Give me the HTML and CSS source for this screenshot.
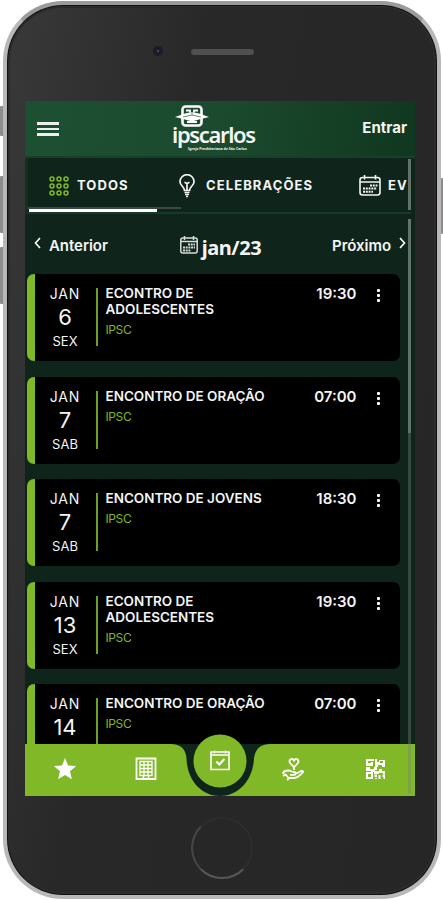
FILE: index.html
```html
<!DOCTYPE html>
<html lang="pt-BR">
<head>
<meta charset="utf-8">
<title>Agenda</title>
<link rel="stylesheet" href="styles.css">
</head>
<body>
<div class="stage">
  <i class="key key-mute"></i><i class="key key-up"></i><i class="key key-down"></i><i class="key key-power"></i>
  <div class="phone">
    <div class="phone-top"><i class="camera"></i><i class="speaker"></i></div>
    <div class="screen">
      <header class="topbar">
        <div class="burger"><i></i><i></i><i></i></div>
        <div class="logo">
          <svg class="logo-mark" width="34" height="22" viewBox="0 0 34 22" fill="none" stroke="#fff">
            <rect x="7.5" y="1.5" width="19" height="19" rx="3" stroke-width="2.6"/>
            <path d="M11 5.5h4v2M23 5.5h-4v2M12 17h10" stroke-width="1.8"/>
            <path d="M0 12 10 8.500 17 7l7 1.500L34 12l-10 2.500-7 2-7-2z" fill="#fff" stroke="none"/>
            <path d="M8 12l9-2 9 2M17 6v4" stroke="#28593b" stroke-width=".7"/>
          </svg>
          <span class="logo-name">ipscarlos</span>
          <span class="logo-sub">Igreja Presbiteriana de São Carlos</span>
        </div>
        <span class="enter">Entrar</span>
      </header>
      <nav class="tabs">
        <div class="tab tab-all">
          <svg width="20" height="20" viewBox="0 0 20 20" fill="none" stroke="#82bc20" stroke-width="1.5">
            <circle cx="3" cy="3" r="2"/><circle cx="10" cy="3" r="2"/><circle cx="17" cy="3" r="2"/>
            <circle cx="3" cy="10" r="2"/><circle cx="10" cy="10" r="2"/><circle cx="17" cy="10" r="2"/>
            <circle cx="3" cy="17" r="2"/><circle cx="10" cy="17" r="2"/><circle cx="17" cy="17" r="2"/>
          </svg>
          <span>TODOS</span>
        </div>
        <div class="tab tab-cel">
          <svg width="16" height="24" viewBox="0 0 16 24" fill="none" stroke="#f4f4f4" stroke-width="1.7">
            <path d="M5.5 16.5C5.5 12.5 1 12 1 7.700a7 7 0 0 1 14 0c0 4.300-4.500 4.800-4.500 8.800z"/>
            <path d="M5.500 18.500h5M6 20.500h4M7 22.500h2M8 16V9.500L5.500 8.300M8 9.500l2.500-1.200"/>
          </svg>
          <span>CELEBRAÇÕES</span>
        </div>
        <div class="tab tab-ev">
          <svg width="22" height="21" viewBox="0 0 22 21" fill="none" stroke="#f4f4f4" stroke-width="1.600">
            <rect x="1" y="2.500" width="20" height="17.500" rx="2.500"/><path d="M1 7h20M5.500 0v4.500M16.500 0v4.500"/>
            <path d="M11 10.500h7.500M4 13.500h14M4 16.700h10" stroke-width="2" stroke-dasharray="2 .8"/>
          </svg>
          <span>EVENTOS</span>
        </div>
        <i class="tab-scroll"></i><i class="tab-ink"></i>
      </nav>
      <main class="content">
        <div class="month">
          <div class="prev"><svg width="7" height="12" viewBox="0 0 7 12" fill="none" stroke="#fff" stroke-width="1.600"><path d="M6 1 1.500 6 6 11"/></svg><span class="t-prev">Anterior</span></div>
          <div class="cur">
            <svg width="18" height="18" viewBox="0 0 18 18" fill="none" stroke="#d8dbd9" stroke-width="1.500">
              <rect x=".8" y="2" width="16.400" height="15" rx="2"/><path d="M1 5.500h16M4.500 0v4M13.500 0v4"/>
              <path d="M8 8.500h7M3 11.500h12M3 14.500h8" stroke-width="1.800" stroke-dasharray="2 .7"/>
            </svg><span class="t-cur">jan/23</span></div>
          <div class="next"><span class="t-next">Próximo</span><svg width="7" height="12" viewBox="0 0 7 12" fill="none" stroke="#fff" stroke-width="1.600"><path d="M1 1 5.500 6 1 11"/></svg></div>
        </div>
        <div class="list">
          <article class="card"><div class="date"><span class="mon">JAN</span><span class="day">6</span><span class="wk">SEX</span></div><i class="rule"></i><div class="info"><h3>ECONTRO DE<br>ADOLESCENTES</h3><p>IPSC</p></div><time>19:30</time><div class="dots"><i></i><i></i><i></i></div></article>
          <article class="card"><div class="date"><span class="mon">JAN</span><span class="day">7</span><span class="wk">SAB</span></div><i class="rule"></i><div class="info"><h3>ENCONTRO DE ORAÇÃO</h3><p>IPSC</p></div><time>07:00</time><div class="dots"><i></i><i></i><i></i></div></article>
          <article class="card"><div class="date"><span class="mon">JAN</span><span class="day">7</span><span class="wk">SAB</span></div><i class="rule"></i><div class="info"><h3>ENCONTRO DE JOVENS</h3><p>IPSC</p></div><time>18:30</time><div class="dots"><i></i><i></i><i></i></div></article>
          <article class="card"><div class="date"><span class="mon">JAN</span><span class="day">13</span><span class="wk">SEX</span></div><i class="rule"></i><div class="info"><h3>ECONTRO DE<br>ADOLESCENTES</h3><p>IPSC</p></div><time>19:30</time><div class="dots"><i></i><i></i><i></i></div></article>
          <article class="card"><div class="date"><span class="mon">JAN</span><span class="day">14</span></div><i class="rule"></i><div class="info"><h3>ENCONTRO DE ORAÇÃO</h3><p>IPSC</p></div><time>07:00</time><div class="dots"><i></i><i></i><i></i></div></article>
        </div>
      </main>
      <footer class="dock">
        <svg class="dock-shape" width="390" height="62" viewBox="0 0 390 62">
          <path d="M149 10h92v52h-92z" fill="#0f241b"/>
          <path d="M0 10H146Q160 10 161.500 24C162 47 177 62 195 62S228 47 229 24Q231 10 245 10H390V62H0z" fill="#80b827"/>
          <circle cx="195" cy="27" r="26.500" fill="#80b827"/>
        </svg>
        <div class="dock-items">
          <svg width="24" height="24" viewBox="0 0 24 24" fill="#fff"><path d="m12 1 3.100 7.500 8.100.6-6.200 5.200 1.900 7.900-6.900-4.200-6.900 4.200 1.900-7.900L.8 9.100l8.100-.6z"/></svg>
          <svg class="building" width="22" height="24" viewBox="0 0 22 24" fill="none" stroke="#fff"><path d="M1.500 1.500h19v20.500h-19z" stroke-width="1.800"/><path d="M5 4.500h12v14H5zM9 4.500v14M13 4.500v14M5 8h12M5 11.500h12M5 15h12" stroke-width="1.300"/><path d="M1 22.300h20M8.500 18.500V22M13.500 18.500V22" stroke-width="1.500"/></svg>
          <svg class="main-ico" width="20" height="21" viewBox="0 0 20 21" fill="none" stroke="#fff"><path d="M1 2h18v17.500H1z" stroke-width="1.600"/><path d="M1 5h18M4.500 .5v3M15.500 .5v3" stroke-width="1.300"/><path d="m6.300 11.500 3 3 5-5.500" stroke-width="2.200"/></svg>
          <svg class="giving" width="22" height="23" viewBox="0 0 22 23" fill="none" stroke="#fff" stroke-width="1.800"><path d="M12 9C9 6.500 7.500 5.500 7.500 3.400 7.500.5 11 .3 12 2.500c1-2.200 4.500-2 4.500.9C16.500 5.500 15 6.500 12 9zM12 9v3"/><path d="M1 16c0-3 3-3.500 5.500-3.500 2.500 0 3 1.500 5 1.500 3 0 3 2.800.5 2.800H8M13.500 16l5.500-3c1.500-.7 2.600.6 1.500 1.700-3 2.800-4 5.300-8 5.300H7.500L5 22M1 18l2.500-1.500L7 20.500"/></svg>
          <svg class="qr" width="19" height="20" viewBox="0 0 19 20" fill="#fff"><path fill-rule="evenodd" d="M0 0h8v2H2v2h3V3h2v4H0zM9 0h2v3h2V1h6v7h-3V6h-4v2H9zM14 2v2h3V2zM0 8h4v2h4V8h3v3H9v1h4v-2h3v2h3v3h-2v-1h-4v1H8v-2H5v-1H0zM0 13h7v7H0zM2 15v3h3v-3zM8.500 15.500h2.500V18H8.500zM12.500 16h2v4h-2zM16.500 15.500H19V20h-1.500v-2h-1zM9 19h2v1H9z"/></svg>
        </div>
      </footer>
      <i class="bar bar-tabs"></i><i class="bar bar-main"></i><i class="bar bar-low"></i>
    </div>
    <div class="home"></div>
  </div>
</div>
</body>
</html>
```
FILE: styles.css
```css
* { box-sizing: border-box; }
body { margin: 0; background: #fff; color: #f4f4f4; font-family: "Noto Sans", sans-serif; }
i { display: block; }
.stage { position: relative; width: 443px; height: 900px; padding: 1px 2px 0 3px; overflow: hidden; }
.key { position: absolute; background: #8e8c8f; border-radius: 1px; }
.key-mute { left: 0; top: 106px; width: 5px; height: 30px; }
.key-up { left: 0; top: 176px; width: 5px; height: 57px; }
.key-down { left: 0; top: 247px; width: 5px; height: 57px; }
.key-power { left: 438px; top: 178px; width: 5px; height: 56px; }
.phone { position: relative; width: 438px; height: 898px; border: 4px solid #b9b7b8; border-top-color: #9b9b9b; border-radius: 60px; background: linear-gradient(100deg, #393939 0, #282828 35%, #262626 100%); box-shadow: inset 0 0 0 1px #111, inset 0 0 0 3px #2c2c2c; padding: 0 18px; }
.phone-top { height: 96px; display: flex; align-items: flex-start; padding: 41px 0 0 128px; gap: 28px; }
.camera { width: 10px; height: 10px; border-radius: 50%; background: #5a5880; border: 4px solid #1d1b2a; }
.speaker { width: 63px; height: 6px; border-radius: 3px; background: #505050; margin-top: 3px; }
.screen { position: relative; width: 390px; height: 695px; display: flex; flex-direction: column; background: #0f241b; overflow: hidden; }
.topbar { height: 57px; flex: none; display: grid; grid-template-columns: 1fr 90px 1fr; align-items: start; padding: 0 8px 0 12px; background: linear-gradient(100deg, #1d5032, #1b4a2f 50%, #10371f); border-bottom: 2px solid #173f29; }
.burger { display: flex; flex-direction: column; gap: 3px; margin-top: 21px; width: 22px; }
.burger i { height: 2.500px; background: #eee; }
.logo { display: flex; flex-direction: column; align-items: flex-start; padding: 4px 0 0 5px; margin-left: -8px; }
.logo-mark { flex: none; margin-left: 1px; }
.logo-name { font-size: 22px; line-height: 20px; letter-spacing: -1.350px; font-weight: 600; margin-top: -3px; margin-left: -2px; white-space: nowrap; }
.logo-sub { font-size: 3.500px; line-height: 4px; font-weight: 700; white-space: nowrap; margin: 3px 0 0 14px; }
.enter { justify-self: end; margin-top: 17px; font-family: Inter, sans-serif; font-size: 15px; line-height: 20px; font-weight: 700; letter-spacing: 0; }
.tabs { position: relative; height: 56px; flex: none; display: flex; align-items: flex-start; padding: 17px 0 0 21px; border-bottom: 2px solid #163a29; border-left: 3px solid #123220; overflow: hidden; margin-right: 4px; }
.tab { display: flex; align-items: center; flex: none; height: 20px; font-family: Inter, sans-serif; font-size: 13px; font-weight: 700; letter-spacing: 1.100px; }
.tab-all { width: 130px; gap: 8px; }
.tab-cel { width: 180px; gap: 11px; }
.tab-ev { gap: 7px; }
.tab svg { flex: none; margin-top: 1px; }
.tab span { white-space: nowrap; }
.tab-scroll { position: absolute; left: 0; top: 49px; width: 153px; height: 2px; background: #3b4843; }
.tab-ink { position: absolute; left: 1px; top: 51px; width: 128px; height: 3px; background: #fff; }
.content { flex: 1; min-height: 0; overflow: hidden; }
.month { height: 60px; display: flex; justify-content: space-between; padding: 20px 9px 0 9px; }
.prev, .next, .cur { display: flex; align-items: flex-start; }
.prev { gap: 8px; width: 120px; }
.next { gap: 8px; width: 120px; justify-content: flex-end; }
.prev svg, .next svg { margin-top: 3px; }
.t-prev, .t-next { font-family: Inter, sans-serif; font-size: 15px; line-height: 23px; font-weight: 600; letter-spacing: -.05px; white-space: nowrap; }
.cur { gap: 4px; margin-left: 1px; }
.cur svg { margin-top: 2px; flex: none; }
.t-cur { font-size: 20px; line-height: 27px; font-weight: 700; letter-spacing: -.4px; }
.list { display: flex; flex-direction: column; gap: 15.600px; padding: 0 15px 0 2px; }
.card { height: 87px; flex: none; display: flex; align-items: flex-start; background: #000; border-radius: 7px; border-left: 8px solid #80b827; padding-top: 11px; }
.date { width: 60px; display: flex; flex-direction: column; align-items: center; font-family: Inter, sans-serif; }
.mon { font-size: 14px; line-height: 17px; letter-spacing: .8px; }
.day { font-size: 22px; line-height: 31px; }
.wk { font-size: 13px; line-height: 17px; }
.rule { width: 1.500px; height: 58px; background: #6f9f24; margin: 3px 0 0 1px; }
.info { width: 200px; margin-left: 8px; font-family: Inter, sans-serif; }
h3 { margin: 0; font-size: 13.500px; line-height: 16px; font-weight: 600; letter-spacing: -.02px; white-space: nowrap; }
p { margin: 5px 0 0; color: #80b827; font-size: 12px; line-height: 16px; letter-spacing: -.4px; }
time { width: 51px; text-align: right; font-family: Inter, sans-serif; font-size: 15px; line-height: 17px; font-weight: 600; }
.dots { margin: 4px 0 0 20px; display: flex; flex-direction: column; gap: 2px; }
.dots i { width: 3px; height: 3px; background: #fff; border-radius: 1px; }
.dock { position: absolute; left: 0; bottom: 0; width: 390px; height: 62px; }
.dock-shape { position: absolute; left: 0; top: 0; }
.dock-items { position: relative; height: 62px; display: grid; grid-template-columns: 80px 82px 66px 80px 84px; justify-items: center; align-items: center; padding-top: 8px; }
.main-ico { margin-bottom: 17px; }
.bar { position: absolute; left: 383px; width: 3px; background: #64736a; }
.bar-tabs { top: 58px; height: 51px; }
.bar-main { top: 118px; height: 214px; }
.bar-low { top: 332px; height: 360px; background: rgba(120,130,120,.4); }
.home { width: 62px; height: 62px; border-radius: 50%; border: 2px solid #2d2d2d; border-left-color: #474747; border-bottom-color: #585858; margin: 21px 0 0 166px; }
```
